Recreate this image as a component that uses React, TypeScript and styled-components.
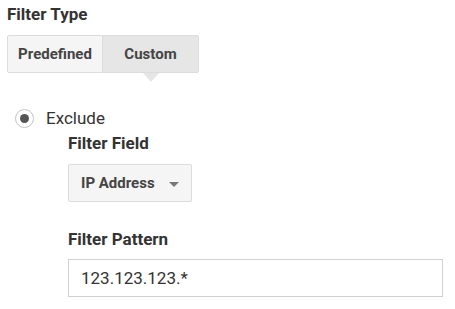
import styled, { createGlobalStyle } from 'styled-components';

const Global = createGlobalStyle`
    body {
        margin : 0;
        background : #fff;
        font-family : Roboto, "Noto Sans", sans-serif;
        color : #333;
    }
`;

const Page = styled.div`
    padding : 4px 8px 0 7px;
    width : 455px;
    height : 309px;
    box-sizing : border-box;
`;

const Heading = styled.div`
    font-size : 17px;
    font-weight : 700;
    line-height : 20px;
    color : #333;
`;

const ButtonGroup = styled.div`
    display : flex;
    margin-top : 11px;
    width : max-content;
`;

const ToggleButton = styled.button<{ active? : boolean; first? : boolean }>`
    position : relative;
    height : 38px;
    width : ${p => (p.first ? '96px' : '96px')};
    padding : 0;
    font-family : Roboto, sans-serif;
    font-size : 15px;
    font-weight : 700;
    color : #444;
    background : ${p => (p.active ? '#e6e6e6' : '#f5f5f5')};
    border : 1px solid #dcdcdc;
    border-left-width : ${p => (p.first ? '1px' : '0')};
    border-radius : ${p => (p.first ? '2px 0 0 2px' : '0 2px 2px 0')};
    cursor : pointer;

    &::after {
        content : '';
        display : ${p => (p.active ? 'block' : 'none')};
        position : absolute;
        left : 50%;
        bottom : -10px;
        margin-left : -8px;
        border-left : 8px solid transparent;
        border-right : 8px solid transparent;
        border-top : 9px solid #e6e6e6;
    }
`;

const RadioRow = styled.label`
    display : flex;
    align-items : center;
    gap : 12px;
    margin-top : 35px;
    padding-left : 8px;
    font-size : 17px;
    line-height : 20px;
    color : #333;
`;

const RadioCircle = styled.span`
    display : flex;
    align-items : center;
    justify-content : center;
    width : 19px;
    height : 19px;
    border : 1px solid #c4c4c4;
    border-radius : 50%;
    box-sizing : border-box;
    background : #fff;

    &::before {
        content : '';
        width : 9px;
        height : 9px;
        border-radius : 50%;
        background : #555;
    }
`;

const Section = styled.div`
    padding-left : 61px;
`;

const FieldLabel = styled.div<{ top : number }>`
    margin-top : ${p => p.top}px;
    font-size : 17px;
    font-weight : 700;
    line-height : 20px;
    color : #333;
`;

const Dropdown = styled.div`
    display : flex;
    align-items : center;
    justify-content : space-between;
    margin-top : 11px;
    width : 124px;
    height : 38px;
    padding : 0 12px 0 12px;
    box-sizing : border-box;
    background : #f5f5f5;
    border : 1px solid #dcdcdc;
    border-radius : 2px;
    font-size : 15px;
    font-weight : 700;
    color : #444;
`;

const Caret = styled.span`
    width : 0;
    height : 0;
    margin-top : 2px;
    border-left : 5px solid transparent;
    border-right : 5px solid transparent;
    border-top : 5px solid #777;
`;

const TextInput = styled.input`
    display : block;
    margin-top : 10px;
    width : 375px;
    height : 38px;
    padding : 0 12px;
    box-sizing : border-box;
    border : 1px solid #d0d0d0;
    border-radius : 0;
    font-family : Roboto, sans-serif;
    font-size : 17px;
    color : #333;
    outline : none;
`;

export default function App() {
    return (
        <Page>
            <Global />
            <Heading>Filter Type</Heading>
            <ButtonGroup>
                <ToggleButton first>Predefined</ToggleButton>
                <ToggleButton active>Custom</ToggleButton>
            </ButtonGroup>
            <RadioRow>
                <RadioCircle />
                Exclude
            </RadioRow>
            <Section>
                <FieldLabel top={5}>Filter Field</FieldLabel>
                <Dropdown>
                    IP Address
                    <Caret />
                </Dropdown>
                <FieldLabel top={27}>Filter Pattern</FieldLabel>
                <TextInput defaultValue="123.123.123.*" />
            </Section>
        </Page>
    );
}
